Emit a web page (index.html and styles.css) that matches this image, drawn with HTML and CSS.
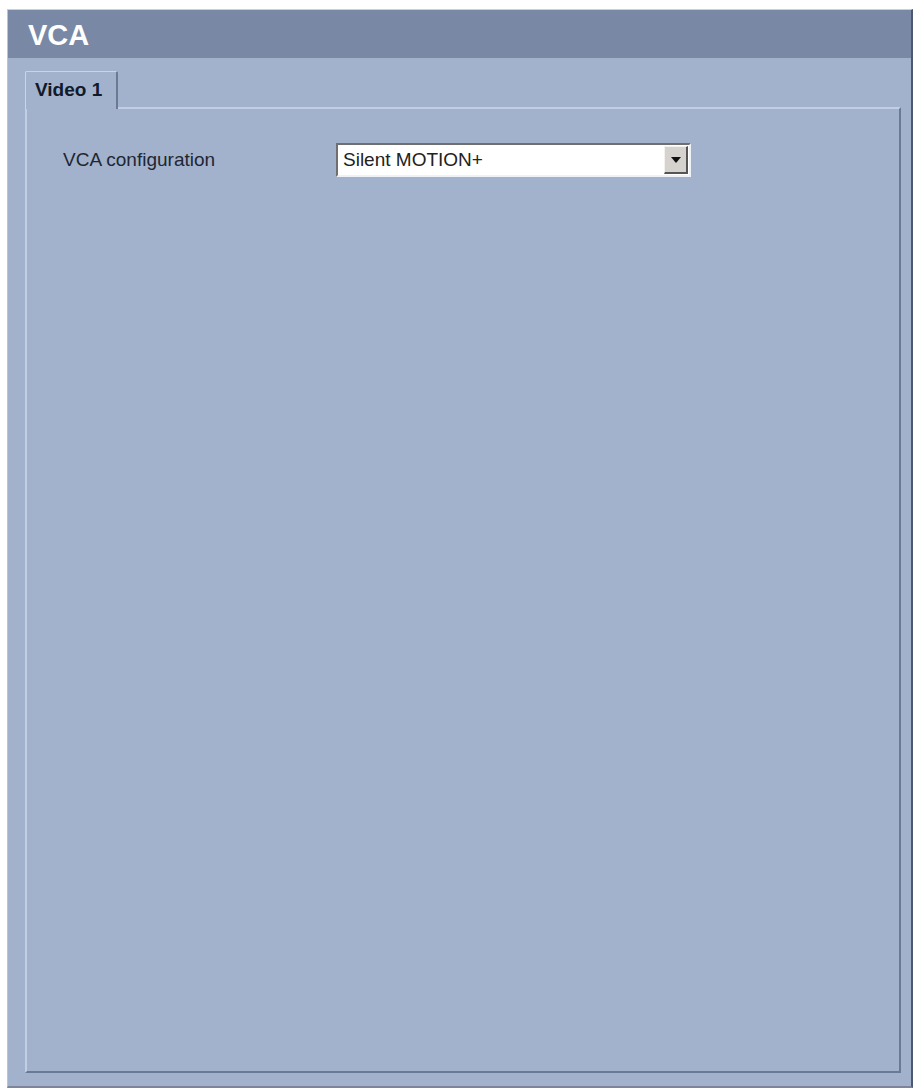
FILE: index.html
```html
<!DOCTYPE html>
<html>
<head>
<meta charset="utf-8">
<title>VCA</title>
<link rel="stylesheet" href="styles.css">
</head>
<body>
<div class="window">
  <div class="header">VCA</div>
  <div class="content">
    <div class="tabs">
      <div class="tab">Video 1</div>
    </div>
    <div class="panel">
      <div class="row">
        <div class="label">VCA configuration</div>
        <div class="select">
          <span class="select-value">Silent MOTION+</span>
          <span class="select-btn"><span class="arrow"></span></span>
        </div>
      </div>
    </div>
  </div>
</div>
</body>
</html>
```

FILE: styles.css
```css
html, body {
  margin: 0;
  padding: 0;
  background: #ffffff;
}

body {
  font-family: "Liberation Sans", Arial, sans-serif;
}

.window {
  margin: 9px 0 0 7px;
  width: 906px;
  height: 1079px;
  box-sizing: border-box;
  border-top: 1px solid #c9d0dc;
  border-left: 1px solid #bcc4d2;
  border-right: 2px solid #4a5872;
  border-bottom: 2px solid #7c8599;
  background: #a2b2cc;
  display: flex;
  flex-direction: column;
}

.header {
  height: 48px;
  background: #7888a5;
  color: #ffffff;
  font-weight: bold;
  font-size: 29px;
  line-height: 50px;
  padding-left: 20px;
  flex: none;
}

.content {
  flex: 1;
  display: flex;
  flex-direction: column;
  padding: 13px 10px 13px 17px;
  min-height: 0;
}

.tabs {
  display: flex;
  flex: none;
}

.tab {
  width: 93px;
  height: 38px;
  box-sizing: border-box;
  margin-bottom: -2px;
  position: relative;
  z-index: 1;
  background: #a2b2cc;
  border-top: 1px solid #c8d4e8;
  border-left: 1px solid #c8d4e8;
  border-right: 2px solid #6a7994;
  border-radius: 2px 2px 0 0;
  font-weight: bold;
  font-size: 19px;
  color: #111a2b;
  padding-left: 9px;
  line-height: 36px;
}

.panel {
  flex: 1;
  box-sizing: border-box;
  border-top: 2px solid #c2cee3;
  border-left: 2px solid #c2cee3;
  border-right: 2px solid #6a7994;
  border-bottom: 2px solid #6a7994;
  padding: 34px 0 0 36px;
}

.row {
  display: flex;
  align-items: center;
}

.label {
  width: 273px;
  font-size: 19px;
  color: #1f2633;
}

.select {
  width: 355px;
  height: 34px;
  box-sizing: border-box;
  background: #ffffff;
  border-top: 2px solid #6f6f6f;
  border-left: 2px solid #6f6f6f;
  border-right: 2px solid #eef1f6;
  border-bottom: 2px solid #eef1f6;
  display: flex;
  align-items: center;
  justify-content: space-between;
  padding: 0 1px 0 5px;
}

.select-value {
  font-size: 19px;
  color: #222222;
}

.select-btn {
  width: 24px;
  height: 28px;
  box-sizing: border-box;
  background: #d6d3ce;
  border-top: 1px solid #f4f2ee;
  border-left: 1px solid #f4f2ee;
  border-right: 2px solid #555555;
  border-bottom: 2px solid #555555;
  display: flex;
  align-items: center;
  justify-content: center;
}

.arrow {
  width: 0;
  height: 0;
  border-left: 5px solid transparent;
  border-right: 5px solid transparent;
  border-top: 6px solid #111111;
}
```
